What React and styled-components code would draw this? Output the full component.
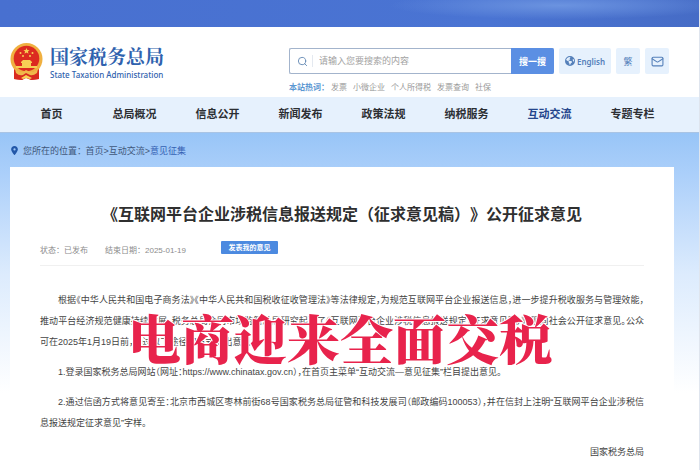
import styled, { createGlobalStyle } from "styled-components"
import { LuSearch, LuMail } from "react-icons/lu"
import { FaEarthAmericas, FaLocationDot } from "react-icons/fa6"

const sans = `"Liberation Sans", "Noto Sans CJK SC", sans-serif`
const serif = `"Noto Serif CJK SC", "Source Han Serif SC", "Noto Sans CJK SC", serif`

const GlobalStyle = createGlobalStyle`
  * { box-sizing: border-box; }
  body { margin: 0; background: #fff; color: #444; font-family: ${sans}; font-size: 9px; }
  a { color: inherit; text-decoration: none; }
  button, input { font-family: inherit; border: 0; padding: 0; }
  h1, h2, p { margin: 0; }
`

const Page = styled.div`
  display: flex;
  flex-direction: column;
  min-height: 100vh;
  border-right: 1px solid #dfe5ee;
`

const Banner = styled.div`
  height: 27px;
  background:
    radial-gradient(ellipse 170px 14px at 80% 20%, #6b93e0 0%, transparent 100%),
    linear-gradient(90deg, #4870d0 0%, #4a74d3 70%, #466cc6 100%);
`

const Header = styled.header`
  display: flex;
  justify-content: space-between;
  height: 70px;
  padding: 16px 30px 0 10px;
`

const Brand = styled.a`
  display: flex;
  gap: 7px;
`

const BrandText = styled.div`
  color: #2f62ae;
`

const BrandName = styled.h1`
  font-family: ${serif};
  font-size: 19px;
  line-height: 26px;
  font-weight: 700;
  white-space: nowrap;
`

const BrandSub = styled.div`
  font-family: "Noto Sans", sans-serif;
  font-size: 8px;
  line-height: 12px;
  font-weight: 500;
`

const Tools = styled.div`
  display: flex;
  align-items: flex-start;
  gap: 5px;
  padding-top: 5px;
`

const SearchBox = styled.form`
  display: flex;
  align-items: center;
  width: 265px;
  height: 26px;
  padding-left: 7px;
  border: 1px solid #a3b4cc;
  border-right: 0;
  border-radius: 2px;
  color: #6489b4;
`

const SearchInput = styled.input`
  flex: 1;
  min-width: 0;
  margin-left: 4px;
  padding-left: 6px;
  border-left: 1px solid #e4e9f0;
  font-size: 9px;
  line-height: 12px;
  outline: 0;

  &::placeholder { color: #a2a2a2; }
`

const SearchButton = styled.button`
  width: 43px;
  height: 26px;
  border-radius: 0 2px 2px 0;
  background: #5b8fe3;
  color: #fff;
  font-size: 9px;
  font-weight: 700;
`

const HotWords = styled.div`
  display: flex;
  gap: 6px;
  margin-top: 7px;
  color: #999;
  font-size: 8px;
  line-height: 14px;

  strong { color: #5b97d2; margin-right: -4px; }
`

const ToolButton = styled.button`
  display: flex;
  align-items: center;
  justify-content: center;
  gap: 2px;
  width: ${(p) => (p.$wide ? "52px" : "24px")};
  height: 26px;
  border-radius: 2px;
  background: #e6f1fd;
  color: #5580ba;
  font-family: "Noto Sans", "Noto Sans CJK SC", sans-serif;
  font-size: ${(p) => (p.$wide ? "8px" : "9px")};
  font-weight: ${(p) => (p.$wide ? 600 : 400)};
`

const Nav = styled.nav`
  display: grid;
  grid-template-columns: repeat(8, 1fr);
  height: 35px;
  padding: 0 25px 0 10px;
  background: #e6f1fd;
`

const NavLink = styled.a`
  text-align: center;
  font-size: 11px;
  line-height: 34px;
  font-weight: 700;
  && { color: ${(p) => (p.$active ? "#24468c" : "#2c2f33")}; }
`

const Main = styled.main`
  flex: 1;
  display: flex;
  flex-direction: column;
  padding: 0 25px 0 10px;
  border-top: 1px solid #a9c4e4;
  background: linear-gradient(180deg, #98c5f7 0, #abcffa 40px, #dcebfd 140px, #fff 260px);
`

const Crumbs = styled.div`
  display: flex;
  align-items: center;
  gap: 4px;
  height: 34px;
  color: #40577a;
  font-size: 9px;
  font-feature-settings: "halt";

  svg { color: #2257a8; }
  a:last-child { color: #3561b4; }
`

const Card = styled.article`
  position: relative;
  flex: 1;
  padding: 35px 30px 8px;
  background: #fff;
`

const Title = styled.h2`
  color: #2f2f2f;
  text-align: center;
  text-spacing-trim: space-all;
  font-size: 16px;
  line-height: 26px;
  white-space: nowrap;
`

const Meta = styled.div`
  display: flex;
  align-items: center;
  gap: 17px;
  margin-top: 13px;
  padding-bottom: 5px;
  color: #8c8c8c;
  font-size: 8px;
  line-height: 19px;
  border-bottom: 1px solid #f0f0f0;
`

const OpinionButton = styled.button`
  align-self: flex-start;
  width: 57px;
  height: 13px;
  margin-left: 18px;
  border-radius: 1px;
  background: #4c8ae0;
  color: #fff;
  font-size: 7px;
  line-height: 13px;
  font-weight: 700;
`

const Body = styled.div`
  display: flex;
  flex-direction: column;
  gap: 9px;
  margin-top: 24px;
  color: #444;
  font-size: 9px;
  line-height: 21px;
  font-feature-settings: "halt";

  p { text-indent: 2em; text-align: justify; }
`

const Signature = styled.div`
  margin-top: 8px;
  text-align: right;
  line-height: 21px;
`

const Headline = styled.strong`
  position: absolute;
  top: 135px;
  left: 0;
  right: 4px;
  color: #e8234c;
  text-align: center;
  font-family: ${serif};
  font-size: 53px;
  line-height: 70px;
  font-weight: 900;
  white-space: nowrap;
  -webkit-text-stroke: 2px #fff;
  paint-order: stroke fill;
`

const navItems = ["首页", "总局概况", "信息公开", "新闻发布", "政策法规", "纳税服务", "互动交流", "专题专栏"]
const hotWords = ["发票", "小微企业", "个人所得税", "发票查询", "社保"]

function Emblem() {
  return (
    <svg width="33" height="38" viewBox="0 0 33 38" aria-hidden="true">
      <path d="M4 24 L4 36 L12 37 L16 35 L21 37 L29 36 L29 24Z" fill="#d92a1f" />
      <circle cx="16.500" cy="16" r="16" fill="#f0b040" />
      <circle cx="16.500" cy="15.500" r="12.800" fill="#dc2a20" />
      <path d="M16.500 5l.9 2 2.200.2-1.700 1.400.6 2.200-2-1.200-2 1.200.6-2.200-1.700-1.400 2.200-.2z" fill="#f7cf55" />
      <g fill="#f7cf55">
        <circle cx="10.500" cy="10" r="1" />
        <circle cx="22.500" cy="10" r="1" />
        <circle cx="13" cy="13" r="1" />
        <circle cx="20" cy="13" r="1" />
        <path d="M11 19l2-2h7l2 2v1H11zM12 20h9v3h-9zM6 23h21v2H6z" />
      </g>
      <path d="M5 27q11 5 23 0l1 9-8 1-4-5-5 5-8-1z" fill="#d92a1f" />
      <path d="M5 26q5 3 8 3l3-2 4 2q4 0 8-3l-1 4q-4 3-7 2l-4-2-3 2q-4 1-7-2z" fill="#f0b84a" />
      <path d="M11 35l5-3 6 3-2 1-4-1-3 1z" fill="#f7cf55" />
    </svg>
  )
}

export default function App() {
  return (
    <Page>
      <GlobalStyle />
      <Banner />
      <Header>
        <Brand href="#">
          <Emblem />
          <BrandText>
            <BrandName>国家税务总局</BrandName>
            <BrandSub>State Taxation Administration</BrandSub>
          </BrandText>
        </Brand>
        <Tools>
          <div>
            <SearchBox onSubmit={(e) => e.preventDefault()}>
              <LuSearch size={11} />
              <SearchInput aria-label="搜索" placeholder="请输入您要搜索的内容" />
              <SearchButton>搜一搜</SearchButton>
            </SearchBox>
            <HotWords>
              <strong>本站热词：</strong>
              {hotWords.map((word) => (<a href="#" key={word}>{word}</a>))}
            </HotWords>
          </div>
          <ToolButton $wide><FaEarthAmericas size={10} />English</ToolButton>
          <ToolButton>繁</ToolButton>
          <ToolButton aria-label="邮箱"><LuMail size={13} /></ToolButton>
        </Tools>
      </Header>

      <Nav>
        {navItems.map((item) => (
          <NavLink href="#" key={item} $active={item === "互动交流"}>{item}</NavLink>
        ))}
      </Nav>

      <Main>
        <Crumbs>
          <FaLocationDot size={9} />
          <span>您所在的位置：</span>
          <span><a href="#">首页</a>&gt;<a href="#">互动交流</a>&gt;<a href="#">意见征集</a></span>
        </Crumbs>

        <Card>
          <Title>《互联网平台企业涉税信息报送规定（征求意见稿）》公开征求意见</Title>
          <Meta>
            <span>状态：已发布</span>
            <span>结束日期：2025-01-19</span>
            <OpinionButton>发表我的意见</OpinionButton>
          </Meta>
          <Body>
            <p>根据《中华人民共和国电子商务法》《中华人民共和国税收征收管理法》等法律规定，为规范互联网平台企业报送信息，进一步提升税收服务与管理效能，推动平台经济规范健康持续发展，税务总局会同市场监管总局研究起草了《互联网平台企业涉税信息报送规定（征求意见稿）》，现向社会公开征求意见。公众可在2025年1月19日前，通过以下途径和方式提出意见：</p>
            <p>1.登录国家税务总局网站（网址：https://www.chinatax.gov.cn），在首页主菜单“互动交流—意见征集”栏目提出意见。</p>
            <p>2.通过信函方式将意见寄至：北京市西城区枣林前街68号国家税务总局征管和科技发展司（邮政编码100053），并在信封上注明“互联网平台企业涉税信息报送规定征求意见”字样。</p>
          </Body>
          <Signature>国家税务总局</Signature>
          <Headline>电商迎来全面交税</Headline>
        </Card>
      </Main>
    </Page>
  )
}
